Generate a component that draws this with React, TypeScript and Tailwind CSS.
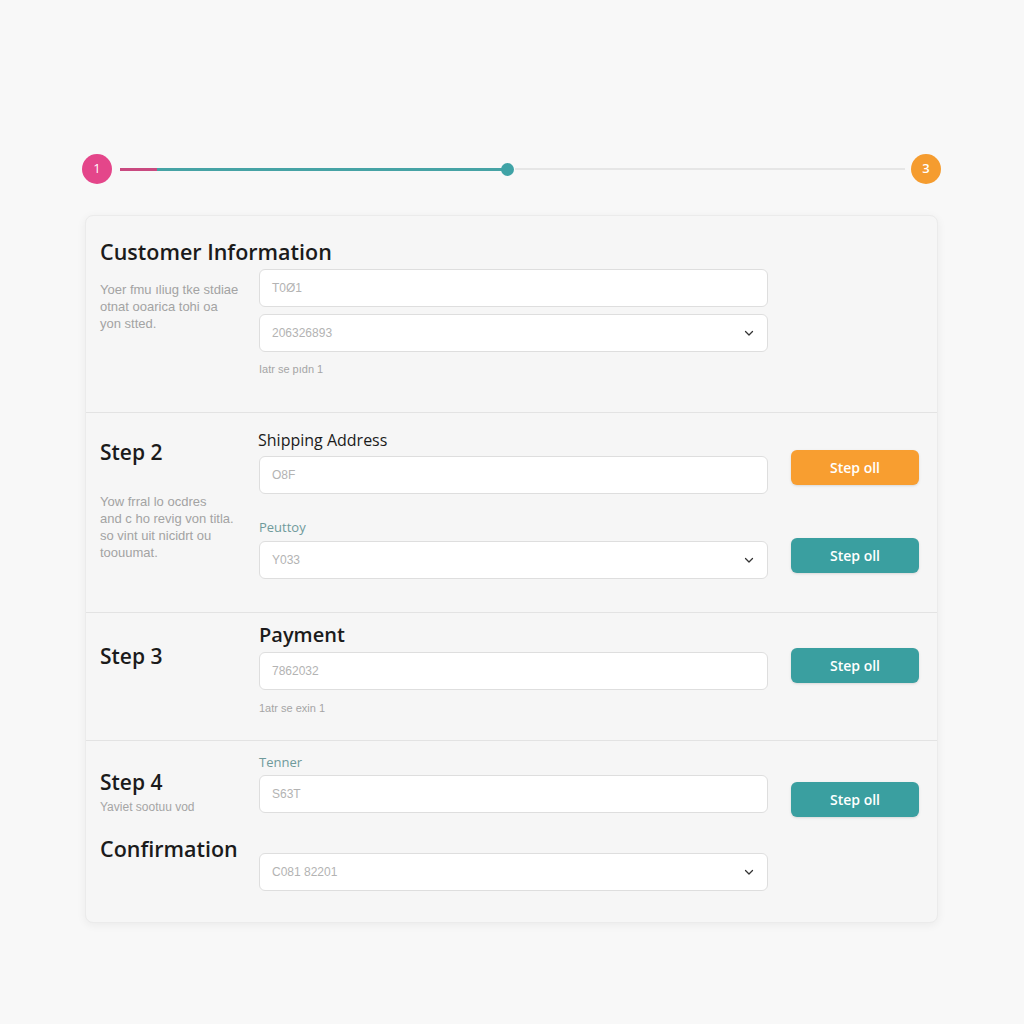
import React from 'react';

const sans = { fontFamily: '"Open Sans", "Noto Sans", sans-serif' };

function Chevron(): React.JSX.Element {
  return (
    <svg width="12" height="12" viewBox="0 0 24 24" fill="none" stroke="#333" strokeWidth="2.5" strokeLinecap="round" strokeLinejoin="round">
      <path d="M5 9l7 7 7-7" />
    </svg>
  );
}

function Field({ value, select = false }: { value: string; select?: boolean }): React.JSX.Element {
  return (
    <div className="h-[38px] w-full rounded-md border border-[#dedede] bg-white px-3 flex items-center justify-between">
      <span className="text-[12px] text-[#b3b3b3] font-['Liberation_Sans',sans-serif]">{value}</span>
      {select && <Chevron />}
    </div>
  );
}

function StepButton({ color }: { color: 'orange' | 'teal' }): React.JSX.Element {
  const bg = color === 'orange' ? 'bg-[#f89e30]' : 'bg-[#3a9fa0]';
  return (
    <button className={`${bg} h-[35px] w-[128px] rounded-md text-white text-[14px] font-semibold shadow-sm`}>
      Step oll
    </button>
  );
}

// left column description text
function Desc({ lines }: { lines: string[] }): React.JSX.Element {
  return (
    <p className="text-[13px] leading-[17px] text-[#a3a3a3] font-['Liberation_Sans',sans-serif] whitespace-nowrap">
      {lines.map((l, i) => (
        <span key={i} className="block">{l}</span>
      ))}
    </p>
  );
}

export default function App(): React.JSX.Element {
  return (
    <div className="min-h-[1024px] w-full bg-[#f8f8f8]" style={sans}>
      {/* progress */}
      <div className="pt-[154px] pl-[82px] pr-[83px] flex items-center">
        <div className="h-[30px] w-[30px] rounded-full bg-[#e4468a] text-white text-[13px] flex items-center justify-center">1</div>
        <div className="ml-[8px] h-[3px] w-[37px] bg-[#c94a80]" />
        <div className="h-[3px] w-[346px] bg-[#46a3a5]" />
        <div className="h-[13px] w-[13px] rounded-full bg-[#3fa3a6] -ml-[2px]" />
        <div className="h-[2px] flex-1 bg-[#e6e6e6] ml-[1px] mr-[6px]" />
        <div className="h-[30px] w-[30px] rounded-full bg-[#f59c2f] text-white text-[13px] font-semibold flex items-center justify-center">3</div>
      </div>

      {/* card */}
      <div className="mt-[31px] ml-[85px] w-[853px] rounded-lg border border-[#ebebeb] bg-[#f6f6f6] shadow-[0_2px_10px_rgba(0,0,0,0.06)]">
        {/* section 1 */}
        <div className="h-[197px] border-b border-[#e3e3e3] pl-[14px] pt-[22px]">
          <h2 className="text-[21.5px] leading-[28px] font-semibold text-[#1b1b1b]">Customer Information</h2>
          <div className="mt-[3px] grid grid-cols-[159px_509px] items-start">
            <div className="pt-[12px]">
              <Desc lines={['Yoer fmu ıliug tke stdiae', 'otnat ooarica tohi oa', 'yon stted.']} />
            </div>
            <div className="flex flex-col gap-[7px]">
              <Field value="T0Ø1" />
              <Field value="206326893" select />
              <span className="mt-[3px] text-[11px] leading-[14px] text-[#a5a5a5] font-['Liberation_Sans',sans-serif]">Iatr se pıdn 1</span>
            </div>
          </div>
        </div>

        {/* section 2 */}
        <div className="h-[200px] border-b border-[#e3e3e3] pl-[14px] grid grid-cols-[159px_509px_151px] items-start">
          <div className="pt-[25px]">
            <h3 className="text-[21px] leading-[28px] font-semibold text-[#1b1b1b]">Step 2</h3>
            <div className="mt-[27px]">
              <Desc lines={['Yow frral lo ocdres', 'and c ho revig von titla.', 'so vint uit nicidrt ou', 'toouumat.']} />
            </div>
          </div>
          <div className="pt-[17px]">
            <div className="text-[16px] leading-[20px] font-medium text-[#1b1b1b] -ml-[1px]">Shipping Address</div>
            <div className="mt-[6px]"><Field value="O8F" /></div>
            <div className="mt-[25px] text-[13px] leading-[16px] text-[#6f9a9b]">Peuttoy</div>
            <div className="mt-[6px]"><Field value="Y033" select /></div>
          </div>
          <div className="pl-[23px] pt-[37px] flex flex-col gap-[53px]">
            <StepButton color="orange" />
            <StepButton color="teal" />
          </div>
        </div>

        {/* section 3 */}
        <div className="h-[128px] border-b border-[#e3e3e3] pl-[14px] grid grid-cols-[159px_509px_151px] items-start">
          <div className="pt-[29px]">
            <h3 className="text-[21px] leading-[28px] font-semibold text-[#1b1b1b]">Step 3</h3>
          </div>
          <div className="pt-[9px]">
            <div className="text-[20px] leading-[26px] font-semibold text-[#1b1b1b]">Payment</div>
            <div className="mt-[4px]"><Field value="7862032" /></div>
            <div className="mt-[11px] text-[11px] leading-[14px] text-[#a5a5a5] font-['Liberation_Sans',sans-serif]">1atr se exin 1</div>
          </div>
          <div className="pl-[23px] pt-[35px]">
            <StepButton color="teal" />
          </div>
        </div>

        {/* section 4 */}
        <div className="h-[181px] pl-[14px] grid grid-cols-[159px_509px_151px] items-start">
          <div className="pt-[27px]">
            <h3 className="text-[21px] leading-[28px] font-semibold text-[#1b1b1b]">Step 4</h3>
            <div className="mt-[3px] text-[12px] leading-[16px] text-[#a5a5a5] font-['Liberation_Sans',sans-serif]">Yaviet sootuu vod</div>
            <h3 className="mt-[20px] text-[21.5px] leading-[28px] font-semibold text-[#1b1b1b] whitespace-nowrap">Confirmation</h3>
          </div>
          <div className="pt-[13px]">
            <div className="text-[13px] leading-[16px] text-[#6f9a9b]">Tenner</div>
            <div className="mt-[5px]"><Field value="S63T" /></div>
            <div className="mt-[40px]"><Field value="C081 82201" select /></div>
          </div>
          <div className="pl-[23px] pt-[41px]">
            <StepButton color="teal" />
          </div>
        </div>
      </div>
    </div>
  );
}
